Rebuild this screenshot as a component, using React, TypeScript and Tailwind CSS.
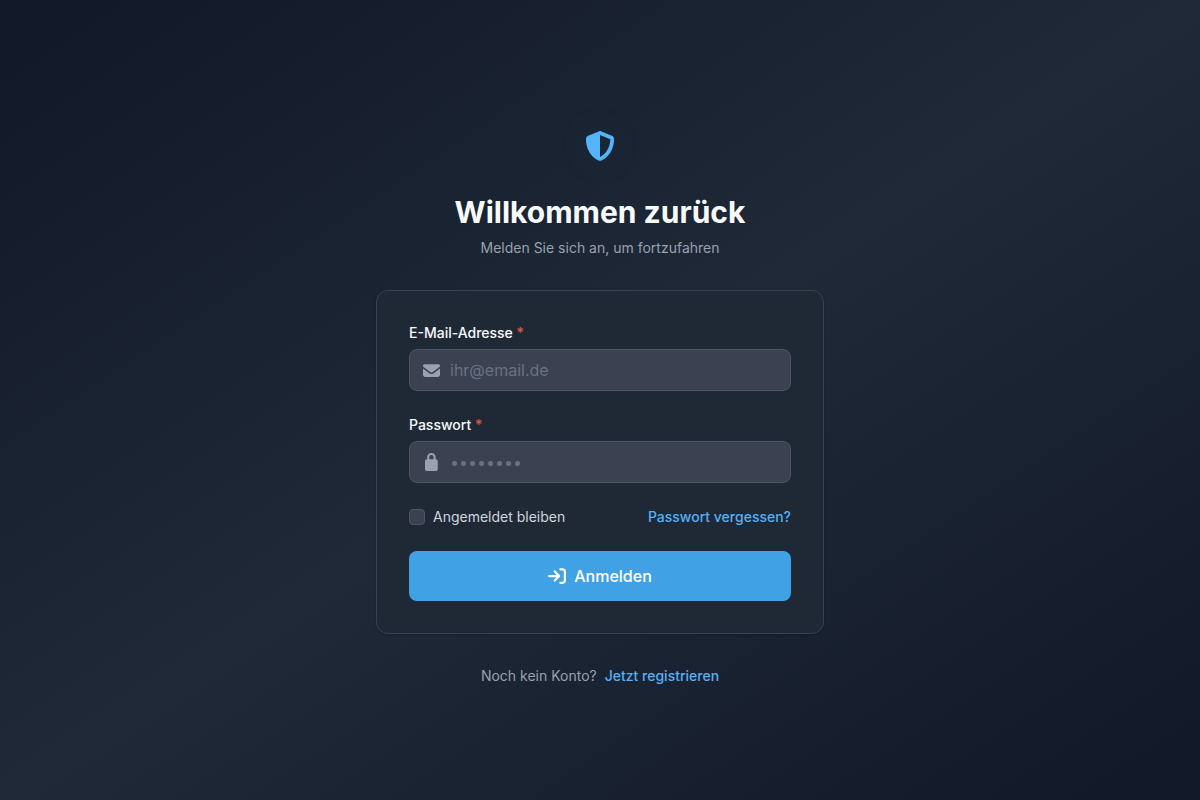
import type { InputHTMLAttributes, ReactNode } from 'react'
import { FaArrowRightToBracket, FaShieldHalved } from 'react-icons/fa6'

function EnvelopeIcon() {
  return (
    <svg viewBox="0 0 512 512" fill="currentColor" className="size-[17px]" aria-hidden="true">
      <path d="M48 64c-26.5 0-48 21.5-48 48 0 15.1 7.1 29.3 19.2 38.4l208 156c17.1 12.8 40.5 12.8 57.6 0l208-156c12.1-9.1 19.2-23.3 19.2-38.4 0-26.5-21.5-48-48-48L48 64zM0 196L0 384c0 35.3 28.7 64 64 64l384 0c35.3 0 64-28.7 64-64l0-188-198.4 148.8c-34.1 25.6-81.1 25.6-115.2 0L0 196z" />
    </svg>
  )
}

function LockIcon() {
  return (
    <svg viewBox="0 0 384 512" fill="currentColor" className="h-[17px] overflow-visible" aria-hidden="true">
      <path d="M128 96l0 64 128 0 0-64c0-35.3-28.7-64-64-64s-64 28.7-64 64zM64 160l0-64C64 25.3 121.3-32 192-32S320 25.3 320 96l0 64c35.3 0 64 28.7 64 64l0 224c0 35.3-28.7 64-64 64L64 512c-35.3 0-64-28.7-64-64L0 224c0-35.3 28.7-64 64-64z" />
    </svg>
  )
}

interface FieldProps extends InputHTMLAttributes<HTMLInputElement> {
  id: string
  label: string
  icon: ReactNode
}

function Field({ id, label, icon, ...props }: FieldProps) {
  return (
    <div>
      <label htmlFor={id} className="block text-sm font-medium text-gray-50">
        {label} <span className="text-[#e5534b]">*</span>
      </label>
      <div className="relative mt-1.5">
        <span className="pointer-events-none absolute inset-y-0 left-0 flex w-11 items-center justify-center text-gray-400">
          {icon}
        </span>
        <input
          id={id}
          required
          className="block w-full rounded-lg border border-[#4b5563] bg-[#3b4150] py-2 pr-3 pl-10 text-base text-gray-100 placeholder:text-gray-500 focus:border-[#54b1f7] focus:outline-none"
          {...props}
        />
      </div>
    </div>
  )
}

export default function App() {
  return (
    <main className="flex min-h-screen items-center justify-center bg-linear-to-br/srgb from-[#111827] via-[#1f2937] to-[#111827] px-4 py-12 font-['Inter',sans-serif]">
      <div className="w-full max-w-md">
        <header className="text-center">
          <div className="mx-auto flex size-16 items-center justify-center rounded-2xl text-[#54b4f8]">
            <FaShieldHalved className="size-[30px] drop-shadow-[0_0_12px_rgba(14,60,90,0.4)]" />
          </div>
          <h1 className="mt-4 text-3xl font-bold text-gray-50">Willkommen zurück</h1>
          <p className="mt-2 text-sm text-gray-400">Melden Sie sich an, um fortzufahren</p>
        </header>

        <form
          onSubmit={(e) => e.preventDefault()}
          className="mt-8 space-y-6 rounded-xl border border-[#374151] bg-[#1f2936] p-8 shadow-sm"
        >
          <Field id="email" label="E-Mail-Adresse" type="email" placeholder="ihr@email.de" icon={<EnvelopeIcon />} />
          <Field id="password" label="Passwort" type="password" placeholder="••••••••" icon={<LockIcon />} />

          <div className="flex items-center justify-between text-sm">
            <label htmlFor="remember" className="flex items-center gap-2 text-gray-300">
              <input
                id="remember"
                type="checkbox"
                className="size-4 appearance-none rounded border border-[#4b5563] bg-[#3b4150] checked:bg-[#42a2e5]"
              />
              Angemeldet bleiben
            </label>
            <a href="#" className="font-medium text-[#54b1f7] hover:underline">
              Passwort vergessen?
            </a>
          </div>

          <button
            type="submit"
            className="flex w-full items-center justify-center gap-2 rounded-lg bg-[#40a2e5] py-[13px] font-medium text-white hover:bg-[#3793d4]"
          >
            <FaArrowRightToBracket className="size-[18px]" />
            Anmelden
          </button>
        </form>

        <p className="mt-8 flex justify-center gap-2 text-sm text-gray-400">
          Noch kein Konto?
          <a href="#" className="font-medium text-[#54b1f7] hover:underline">
            Jetzt registrieren
          </a>
        </p>
      </div>
    </main>
  )
}
